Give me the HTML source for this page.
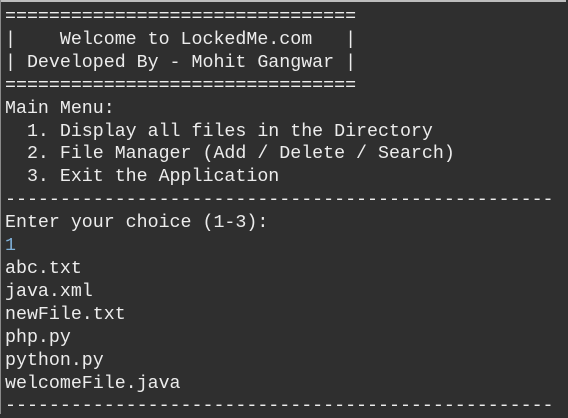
<!DOCTYPE html>
<html><head><style>
html,body{margin:0;padding:0}
body{width:568px;height:414px;background:#2f2f2f;overflow:hidden;position:relative}
.t{position:absolute;left:0;top:0;width:566px;height:2px;background:#bdbdbd}
.l{position:absolute;left:0;top:0;width:1px;height:414px;background:#8a8a8a}
pre{position:absolute;left:5px;top:6px;margin:0;font-family:"Liberation Mono",monospace;font-size:18.3px;line-height:22.9px;color:#ececec}
.b{color:#7fb0d8}
</style></head><body>
<div class="t"></div><div class="l"></div>
<pre>================================
|    Welcome to LockedMe.com   |
| Developed By - Mohit Gangwar |
================================
Main Menu:
  1. Display all files in the Directory
  2. File Manager (Add / Delete / Search)
  3. Exit the Application
--------------------------------------------------
Enter your choice (1-3):
<span class="b">1</span>
abc.txt
java.xml
newFile.txt
php.py
python.py
welcomeFile.java
--------------------------------------------------</pre>
</body></html>
